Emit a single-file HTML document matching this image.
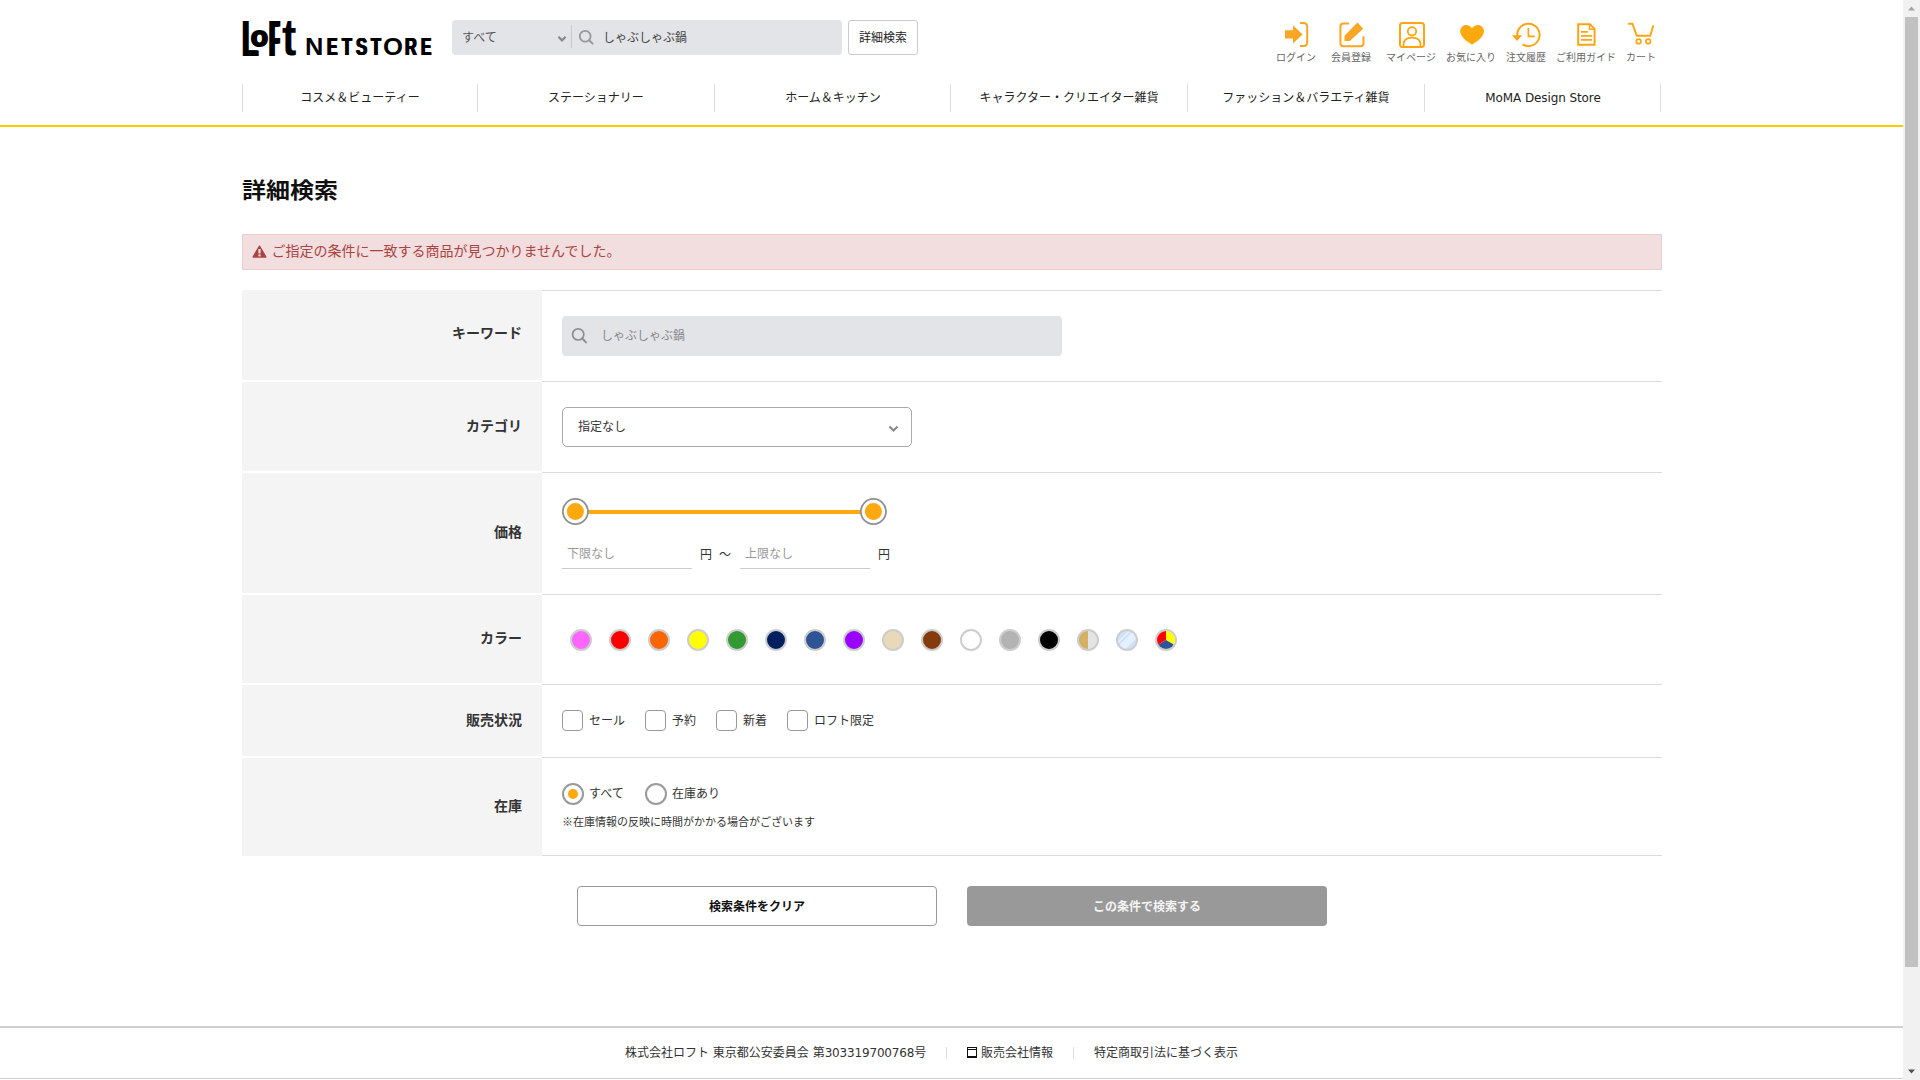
<!DOCTYPE html>
<html lang="ja">
<head>
<meta charset="utf-8">
<title>詳細検索 | ロフトネットストア</title>
<style>
*{box-sizing:border-box;margin:0;padding:0}
html,body{width:1920px;height:1080px;overflow:hidden;background:#fff}
body{position:relative;font-family:"Liberation Sans","Noto Sans CJK JP",sans-serif;color:#333;font-size:13px}
.abs{position:absolute;white-space:nowrap}
/* header */
#logo{left:242px;top:12px;height:48px;width:195px}
#logo b{position:absolute;font-family:"Liberation Sans",sans-serif;font-weight:bold;color:#000;transform-origin:0 0;line-height:1}
#logo .lL{left:.4px;top:1.7px;font-size:49px;transform:scale(.55,1.02);text-shadow:1.6px 0 0 #000,-1.6px 0 0 #000}
#logo .lo{left:8.7px;top:10.1px;font-size:28.4px;-webkit-text-stroke:1.9px #000}
#logo .lF{left:27.8px;top:1.7px;font-size:49px;transform:scale(.304,1.02);text-shadow:5.5px 0 0 #000,-5.5px 0 0 #000,2.7px 0 0 #000,-2.7px 0 0 #000}
#logo .lt{left:40.3px;top:.2px;font-size:49px;transform:scale(.88,1.045)}
#logo .ns{position:absolute;left:0;top:22.7px;font-family:"Liberation Sans",sans-serif;font-weight:bold;font-size:24.5px;line-height:1;color:#000}
#logo .ns i{position:absolute;top:0;font-style:normal;transform-origin:0 0}
#sbox{left:452px;top:20px;width:390px;height:35px;background:#e3e4e8;border-radius:4px}
#sbox .sel{position:absolute;left:10px;top:1px;line-height:34px;font-size:12px;color:#555}
#sbox .sep{position:absolute;left:119px;top:5px;width:1px;height:23px;background:#c9c9cd}
#sbox .kw{position:absolute;left:151px;top:1px;line-height:35px;font-size:12px;color:#444}
#dbtn{left:848px;top:20px;width:70px;height:35px;border:1px solid #ccc;border-radius:3px;background:#fff;font-size:12px;line-height:35px;text-align:center;color:#222}
.hicon{top:22px;height:44px;text-align:center;font-size:10px;color:#666;line-height:14px}
.hicon svg{display:block;margin:0 auto 3px}
.hicon span{display:block;position:absolute;left:-20px;right:-20px;top:28px;text-align:center}
/* nav */
.navsep{top:84px;width:1px;height:28px;background:#dcdcdc}
.navi{top:85px;height:27px;line-height:26px;font-size:12px;color:#222;text-align:center}
#yline{left:0;top:125px;width:1903px;height:2px;background:#fccc00}
/* main */
#h1{left:242px;top:172px;font-size:24px;line-height:36px;font-weight:bold;color:#111;transform:translateY(.6px) scaleY(.89);transform-origin:0 18.5px}
#alert{left:242px;top:234px;width:1420px;height:36px;background:#f2dede;border:1px solid #ebccd1;color:#a94442;font-size:14px;line-height:33px}
#alert svg{position:absolute;left:9px;top:10px}
#alert span{position:absolute;left:28.5px;top:0}
.th{left:242px;width:300px;background:#f4f4f4}
.th b{position:absolute;right:20px;font-size:14px;line-height:20px;color:#333;font-weight:bold}
.ln{left:542px;width:1120px;height:1px;background:#dcdcdc}
.knob{width:27px;height:27px;border-radius:50%;background:#fff;border:1.7px solid #8e8e8e}
.knob i{position:absolute;left:3.3px;top:3.3px;width:17px;height:17px;border-radius:50%;background:#ffa90f}
.pin{width:130px;height:30px;border-bottom:1px solid #ccc}
.pin span{position:absolute;left:5px;top:6px;font-size:12px;line-height:18px;color:#999}
.sw{top:629px;width:22px;height:22px;border-radius:50%;border:2px solid #cdcdcd}
.cb{top:710px;width:21px;height:21px;border:1px solid #999;border-radius:4px;background:#fff}
.cbl{top:711px;font-size:12px;line-height:20px;color:#333}
.rd{top:783px;width:22px;height:22px;border:2px solid #999;border-radius:50%;background:#fff}
.rd i{position:absolute;left:4px;top:4px;width:10px;height:10px;border-radius:50%;background:#ffa90f}
.rdl{top:784px;font-size:12px;line-height:20px;color:#333}
.ft{top:1044px;font-size:12px;line-height:18px;color:#333}
.hl{top:51px;width:60px;text-align:center;font-size:10px;line-height:14px;color:#666}
</style>
</head>
<body>
<!-- HEADER -->
<div id="logo" class="abs"><b class="lL">L</b><b class="lo">o</b><b class="lF">F</b><b class="lt">t</b><span class="ns"><i style="left:63.32px;transform:scaleX(1.036)">N</i><i style="left:85.00px;transform:scaleX(0.644);text-shadow:1.08px 0 0 #000,-1.08px 0 0 #000">E</i><i style="left:100.30px;transform:scaleX(0.659);text-shadow:1.01px 0 0 #000,-1.01px 0 0 #000">T</i><i style="left:114.12px;transform:scaleX(0.683);text-shadow:0.92px 0 0 #000,-0.92px 0 0 #000">S</i><i style="left:128.70px;transform:scaleX(0.659);text-shadow:1.01px 0 0 #000,-1.01px 0 0 #000">T</i><i style="left:140.76px;transform:scaleX(1.049)">O</i><i style="left:162.99px;transform:scaleX(0.663);text-shadow:1.00px 0 0 #000,-1.00px 0 0 #000">R</i><i style="left:178.70px;transform:scaleX(0.630);text-shadow:1.14px 0 0 #000,-1.14px 0 0 #000">E</i></span></div>
<div id="sbox" class="abs">
  <span class="sel">すべて</span>
  <svg class="abs" style="left:105px;top:15px" width="10" height="8" viewBox="0 0 10 8"><path d="M1.500 1.800 L5 5.400 L8.500 1.800" fill="none" stroke="#858585" stroke-width="2.100"/></svg>
  <span class="sep"></span>
  <svg class="abs" style="left:126px;top:9px" width="17" height="17" viewBox="0 0 17 17"><circle cx="7.200" cy="7.200" r="5.400" fill="none" stroke="#999" stroke-width="1.800"/><path d="M11.200 11.200 L14.600 14.600" stroke="#999" stroke-width="2" stroke-linecap="round"/></svg>
  <span class="kw">しゃぶしゃぶ鍋</span>
</div>
<div id="dbtn" class="abs">詳細検索</div>

<!-- header icons -->
<svg class="abs" style="left:1280px;top:20px" width="32" height="30" viewBox="1280 20 32 30">
  <path d="M1285 30.3 H1293 V25.2 L1302.6 34.4 L1293 43.6 V38.6 H1285 Z" fill="#f9a526"/>
  <path d="M1300 23 H1303.5 Q1307.2 23 1307.2 27 V42 Q1307.2 46 1303.5 46 H1300" fill="none" stroke="#f9a526" stroke-width="2"/>
</svg>
<div class="abs hl" style="left:1266px">ログイン</div>
<svg class="abs" style="left:1335px;top:20px" width="32" height="30" viewBox="1335 20 32 30">
  <path d="M1349 23.4 H1343.5 Q1340.4 23.4 1340.4 26.5 V43.2 Q1340.4 46.3 1343.5 46.3 H1360.4 Q1363.500 46.3 1363.500 43.2 V36.300" fill="none" stroke="#f9a526" stroke-width="2"/>
  <path d="M1344.500 41 V35.800 L1357.400 22.600 L1363.200 28.700 L1349.800 41 Z" fill="#f9a526"/>
</svg>
<div class="abs hl" style="left:1321px">会員登録</div>
<svg class="abs" style="left:1395px;top:20px" width="32" height="30" viewBox="1395 20 32 30">
  <rect x="1400" y="23" width="24" height="24" rx="2.5" fill="none" stroke="#ffa514" stroke-width="2"/>
  <circle cx="1412" cy="31.3" r="4.2" fill="none" stroke="#ffa514" stroke-width="1.8"/>
  <path d="M1403.5 46.5 V44.5 Q1403.5 37.6 1412 37.6 Q1420.500 37.6 1420.5 44.5 V46.5" fill="none" stroke="#ffa514" stroke-width="1.8"/>
</svg>
<div class="abs hl" style="left:1381px">マイページ</div>
<svg class="abs" style="left:1455px;top:20px" width="32" height="30" viewBox="1455 20 32 30">
  <path d="M1472 44.8 C1468 42 1460.200 37.5 1460.200 31.300 C1460.200 27.500 1463 25 1466 25 C1468.700 25 1470.800 26.300 1472 28.300 C1473.200 26.300 1475.300 25 1478 25 C1481 25 1484 27.500 1484 31.300 C1484 37.500 1476 42 1472 44.800 Z" fill="#ffa90f"/>
</svg>
<div class="abs hl" style="left:1441px">お気に入り</div>
<svg class="abs" style="left:1510px;top:20px" width="34" height="30" viewBox="1510 20 34 30">
  <path d="M1517.300 36.400 A11.200 11.200 0 1 1 1522.500 44.400" fill="none" stroke="#ffa514" stroke-width="2"/>
  <path d="M1512 35.200 H1522.200 L1517 41 Z" fill="#ffa514"/>
  <path d="M1528.400 28 V36.300 H1534.800" fill="none" stroke="#ffa514" stroke-width="1.700"/>
</svg>
<div class="abs hl" style="left:1496px">注文履歴</div>
<svg class="abs" style="left:1570px;top:20px" width="32" height="30" viewBox="1570 20 32 30">
  <path d="M1578.200 24.200 H1590 L1594.600 28.800 V44.800 H1578.200 Z" fill="none" stroke="#ffa514" stroke-width="2"/>
  <path d="M1589.500 24.200 V29.300 H1594.600" fill="none" stroke="#ffa514" stroke-width="1.500"/>
  <path d="M1581 31.800 H1588 M1581 35.800 H1592 M1581 39.900 H1592" stroke="#ffa514" stroke-width="1.800"/>
</svg>
<div class="abs hl" style="left:1556px">ご利用ガイド</div>
<svg class="abs" style="left:1625px;top:20px" width="32" height="30" viewBox="1625 20 32 30">
  <path d="M1628.200 23.800 H1632.400 L1636.800 35.800 H1650.200 L1653.400 25.300" fill="none" stroke="#ffa514" stroke-width="1.900"/>
  <circle cx="1638.600" cy="41.400" r="2.300" fill="none" stroke="#ffa514" stroke-width="1.700"/>
  <circle cx="1648.200" cy="41.400" r="2.300" fill="none" stroke="#ffa514" stroke-width="1.700"/>
</svg>
<div class="abs hl" style="left:1611px">カート</div>

<!-- NAV -->
<div class="abs navsep" style="left:242px"></div>
<div class="abs navsep" style="left:477px"></div>
<div class="abs navsep" style="left:714px"></div>
<div class="abs navsep" style="left:950px"></div>
<div class="abs navsep" style="left:1187px"></div>
<div class="abs navsep" style="left:1424px"></div>
<div class="abs navsep" style="left:1660px"></div>
<div class="abs navi" style="left:242px;width:236px">コスメ＆ビューティー</div>
<div class="abs navi" style="left:478px;width:236px">ステーショナリー</div>
<div class="abs navi" style="left:715px;width:236px">ホーム＆キッチン</div>
<div class="abs navi" style="left:951px;width:236px">キャラクター・クリエイター雑貨</div>
<div class="abs navi" style="left:1188px;width:236px">ファッション＆バラエティ雑貨</div>
<div class="abs navi" style="left:1425px;width:236px;font-family:'DejaVu Sans','Liberation Sans',sans-serif;letter-spacing:-.1px">MoMA Design Store</div>
<div id="yline" class="abs"></div>

<!-- MAIN -->
<div id="h1" class="abs">詳細検索</div>
<div id="alert" class="abs">
  <svg width="15" height="13" viewBox="0 0 15 13"><path d="M7.5 1.3 L13.7 11.9 L1.3 11.9 Z" fill="#a94442" stroke="#a94442" stroke-width="1.6" stroke-linejoin="round"/><rect x="6.4" y="4" width="2.2" height="4.4" fill="#f2dede"/><rect x="6.4" y="9.4" width="2.2" height="2" fill="#f2dede"/></svg>
  <span>ご指定の条件に一致する商品が見つかりませんでした。</span>
</div>

<!-- table -->
<div class="abs th" style="top:290px;height:90px"><b style="top:33px">キーワード</b></div>
<div class="abs th" style="top:382px;height:89px"><b style="top:34px">カテゴリ</b></div>
<div class="abs th" style="top:473px;height:120px"><b style="top:49px">価格</b></div>
<div class="abs th" style="top:595px;height:88px"><b style="top:33px">カラー</b></div>
<div class="abs th" style="top:685px;height:71px"><b style="top:25px">販売状況</b></div>
<div class="abs th" style="top:758px;height:98px"><b style="top:38px">在庫</b></div>
<div class="abs ln" style="top:290px"></div>
<div class="abs ln" style="top:381px"></div>
<div class="abs ln" style="top:472px"></div>
<div class="abs ln" style="top:594px"></div>
<div class="abs ln" style="top:684px"></div>
<div class="abs ln" style="top:757px"></div>
<div class="abs ln" style="top:855px"></div>

<!-- keyword -->
<div class="abs" id="kwbox" style="left:562px;top:316px;width:500px;height:40px;background:#e3e4e8;border-radius:4px">
  <svg class="abs" style="left:9px;top:11px" width="17" height="17" viewBox="0 0 17 17"><circle cx="7.200" cy="7.400" r="5.600" fill="none" stroke="#8e8e8e" stroke-width="1.700"/><path d="M11.300 11.500 L15 15.400" stroke="#8e8e8e" stroke-width="2" stroke-linecap="round"/></svg>
  <span class="abs" style="left:39px;top:1px;line-height:39px;font-size:12px;color:#888">しゃぶしゃぶ鍋</span>
</div>
<!-- category -->
<div class="abs" id="catsel" style="left:562px;top:407px;width:350px;height:40px;border:1px solid #aaa;border-radius:5px;background:#fff">
  <span class="abs" style="left:15px;top:0;line-height:38px;font-size:12px;color:#333">指定なし</span>
  <svg class="abs" style="left:325px;top:17px" width="11" height="8" viewBox="0 0 11 8"><path d="M1.5 1.5 L5.5 5.5 L9.5 1.5" fill="none" stroke="#888" stroke-width="2"/></svg>
</div>
<!-- price -->
<div class="abs" style="left:575px;top:509.5px;width:298px;height:4.500px;background:#ffa90f"></div>
<svg class="abs" style="left:561px;top:497px" width="30" height="30" viewBox="0 0 30 30"><circle cx="14.4" cy="14.5" r="12.55" fill="#fff" stroke="#909090" stroke-width="1.8"/><circle cx="14.4" cy="14.500" r="8.500" fill="#ffa90f"/></svg>
<svg class="abs" style="left:859px;top:497px" width="30" height="30" viewBox="0 0 30 30"><circle cx="14.4" cy="14.5" r="12.55" fill="#fff" stroke="#909090" stroke-width="1.8"/><circle cx="14.4" cy="14.500" r="8.500" fill="#ffa90f"/></svg>
<div class="abs pin" style="left:562px;top:539px"><span>下限なし</span></div>
<div class="abs" style="left:700px;top:546px;font-size:12px;line-height:18px;color:#333">円</div>
<div class="abs" style="left:719px;top:546px;font-size:12px;line-height:18px;color:#333">～</div>
<div class="abs pin" style="left:740px;top:539px"><span>上限なし</span></div>
<div class="abs" style="left:878px;top:546px;font-size:12px;line-height:18px;color:#333">円</div>
<!-- colors -->
<div class="abs sw" style="left:570px;background:#ff66ff"></div>
<div class="abs sw" style="left:609px;background:#ff0000"></div>
<div class="abs sw" style="left:648px;background:#ff6600"></div>
<div class="abs sw" style="left:687px;background:#ffff00"></div>
<div class="abs sw" style="left:726px;background:#339933"></div>
<div class="abs sw" style="left:765px;background:#001f5f"></div>
<div class="abs sw" style="left:804px;background:#2f5496"></div>
<div class="abs sw" style="left:843px;background:#9900ff"></div>
<div class="abs sw" style="left:882px;background:#e9d9b9"></div>
<div class="abs sw" style="left:921px;background:#843c0c"></div>
<div class="abs sw" style="left:960px;background:#ffffff"></div>
<div class="abs sw" style="left:999px;background:#b3b3b3"></div>
<div class="abs sw" style="left:1038px;background:#000000"></div>
<div class="abs sw" style="left:1077px;background:linear-gradient(90deg,#d5b062 0,#d5b062 50%,#e4e4e4 50%,#e4e4e4 100%)"></div>
<div class="abs sw" style="left:1116px;background:linear-gradient(135deg,#cfe2fb 0,#cfe2fb 30%,#e8f1fd 30%,#e8f1fd 36%,#cfe2fb 36%,#cfe2fb 42%,#e6effc 42%,#e6effc 70%,#cfe2fb 70%,#cfe2fb 100%)"></div>
<div class="abs sw" style="left:1155px;background:#fff;overflow:hidden"><svg style="position:absolute;left:0;top:0" width="18" height="18" viewBox="0 0 18 18"><path d="M9 9 L9 -2 L20 -2 L20 15.35 Z" fill="#ffff00"/><path d="M9 9 L20 15.35 L20 20 L-2 20 L-2 15.35 Z" fill="#2f5496"/><path d="M9 9 L-2 15.35 L-2 -2 L9 -2 Z" fill="#ff0000"/></svg></div>
<!-- status -->
<div class="abs cb" style="left:562px"></div><div class="abs cbl" style="left:589px">セール</div>
<div class="abs cb" style="left:645px"></div><div class="abs cbl" style="left:672px">予約</div>
<div class="abs cb" style="left:716px"></div><div class="abs cbl" style="left:743px">新着</div>
<div class="abs cb" style="left:787px"></div><div class="abs cbl" style="left:814px">ロフト限定</div>
<!-- stock -->
<div class="abs rd" style="left:562px"><i></i></div><div class="abs rdl" style="left:589px">すべて</div>
<div class="abs rd" style="left:645px"></div><div class="abs rdl" style="left:672px">在庫あり</div>
<div class="abs" style="left:562px;top:813px;font-size:11px;line-height:18px;color:#333">※在庫情報の反映に時間がかかる場合がございます</div>


<div class="abs" id="clr" style="left:577px;top:886px;width:360px;height:40px;border:1px solid #999;border-radius:4px;background:#fff;text-align:center;line-height:40px;font-size:12px;font-weight:bold;color:#111">検索条件をクリア</div>
<div class="abs" id="go" style="left:967px;top:886px;width:360px;height:40px;border-radius:4px;background:#999;text-align:center;line-height:42px;font-size:12px;font-weight:bold;color:#f4f4f4">この条件で検索する</div>


<div class="abs" style="left:0;top:1026px;width:1903px;height:2px;background:#cfcfcf"></div>
<div class="abs ft" style="left:625px;font-family:'DejaVu Sans','Noto Sans CJK JP',sans-serif">株式会社ロフト 東京都公安委員会 第<span style="letter-spacing:-.17px">303319700768</span>号</div>
<div class="abs" style="left:946px;top:1047px;width:1px;height:12px;background:#ddd"></div>
<div class="abs" style="left:967px;top:1047px;width:10px;height:11px;border:1px solid #111;border-bottom-width:2px"><i style="position:absolute;left:0;top:1px;width:8px;height:1px;background:#111"></i></div>
<div class="abs ft" style="left:981px">販売会社情報</div>
<div class="abs" style="left:1073px;top:1047px;width:1px;height:12px;background:#ddd"></div>
<div class="abs ft" style="left:1094px">特定商取引法に基づく表示</div>
<div class="abs" style="left:0;top:1078px;width:1903px;height:1px;background:#cfcfcf"></div>


<div class="abs" style="left:1903px;top:0;width:17px;height:1080px;background:#f1f1f1"></div>
<div class="abs" style="left:1905px;top:17px;width:13px;height:950px;background:#c1c1c1"></div>
<svg class="abs" style="left:1903px;top:0" width="17" height="17" viewBox="0 0 17 17"><path d="M5 10.5 L8.5 6.5 L12 10.5 Z" fill="#a3a3a3"/></svg>
<svg class="abs" style="left:1903px;top:1063px" width="17" height="17" viewBox="0 0 17 17"><path d="M5 6.5 L8.5 10.5 L12 6.5 Z" fill="#505050"/></svg>

</body>
</html>
